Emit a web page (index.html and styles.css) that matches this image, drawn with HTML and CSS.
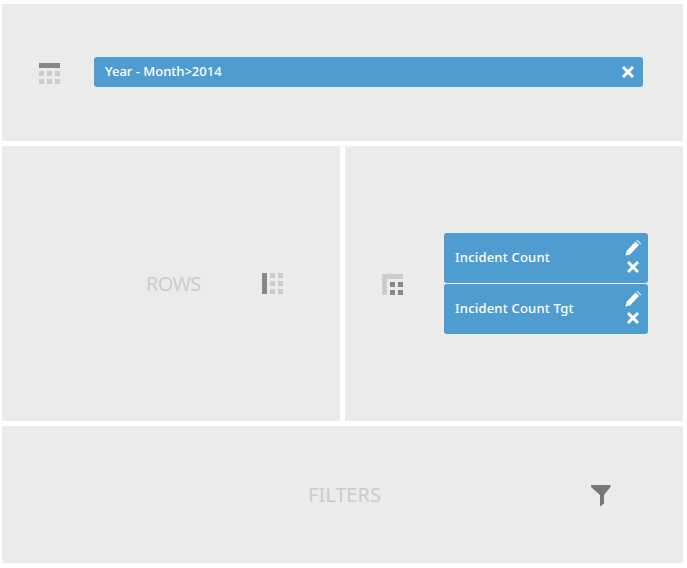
FILE: index.html
```html
<!DOCTYPE html>
<html>
<head>
    <meta charset="UTF-8">
    <title>Shelf</title>
    <link rel="stylesheet" href="styles.css">
</head>
<body>
    <div class="board">
        <div class="panel panel-columns">
            <svg class="icon icon-columns" width="21" height="21" viewBox="0 0 21 21">
                <rect x="0" y="0" width="21" height="5" fill="#888"/>
                <path d="M0 8h5v5h-5zM8 8h5v5h-5zM16 8h5v5h-5zM0 16h5v5h-5zM8 16h5v5h-5zM16 16h5v5h-5z" fill="#ccc"/>
            </svg>
            <div class="chip chip-wide">
                <span class="chip-label">Year - Month&gt;2014</span>
                <svg class="chip-close" width="14" height="14" viewBox="0 0 14 14">
                    <path d="M2 2l10 10M12 2l-10 10" stroke="#fff" stroke-width="3" fill="none"/>
                </svg>
            </div>
        </div>
        <div class="panel panel-rows">
            <span class="drop-label label-rows">ROWS</span>
            <svg class="icon" width="21" height="21" viewBox="0 0 21 21">
                <rect x="0" y="0" width="5" height="21" fill="#888"/>
                <path d="M8 0h5v5h-5zM16 0h5v5h-5zM8 8h5v5h-5zM16 8h5v5h-5zM8 16h5v5h-5zM16 16h5v5h-5z" fill="#ccc"/>
            </svg>
        </div>
        <div class="panel panel-values">
            <svg class="icon" width="21" height="21" viewBox="0 0 21 21">
                <path d="M0 0h21v5h-16v16h-5z" fill="#ccc"/>
                <path d="M8 8h5v5h-5zM16 8h5v5h-5zM8 16h5v5h-5zM16 16h5v5h-5z" fill="#888"/>
            </svg>
            <div class="chip-list">
                <div class="chip chip-tall">
                    <span class="chip-label">Incident Count</span>
                    <div class="chip-tools">
                        <svg width="16" height="16" viewBox="0 0 16 16">
                            <path d="M0.500 15.500l1-4.500 9-9.500 3.500 3.500-9 9.500zM11.500 0.500l1-0.500 3.500 3.500-0.500 1z" fill="#fff"/>
                        </svg>
                        <svg width="14" height="14" viewBox="0 0 14 14">
                            <path d="M2 2l10 10M12 2l-10 10" stroke="#fff" stroke-width="3" fill="none"/>
                        </svg>
                    </div>
                </div>
                <div class="chip chip-tall">
                    <span class="chip-label">Incident Count Tgt</span>
                    <div class="chip-tools">
                        <svg width="16" height="16" viewBox="0 0 16 16">
                            <path d="M0.500 15.500l1-4.500 9-9.500 3.500 3.500-9 9.500zM11.500 0.500l1-0.500 3.500 3.500-0.500 1z" fill="#fff"/>
                        </svg>
                        <svg width="14" height="14" viewBox="0 0 14 14">
                            <path d="M2 2l10 10M12 2l-10 10" stroke="#fff" stroke-width="3" fill="none"/>
                        </svg>
                    </div>
                </div>
            </div>
        </div>
        <div class="panel panel-filters">
            <span class="drop-label">FILTERS</span>
            <svg class="icon" width="20" height="22" viewBox="0 0 20 22">
                <path d="M0 0h19.500v2l-6.500 8v8.500l-4 3v-11.500l-9-8z" fill="#777"/>
            </svg>
        </div>
    </div>
</body>
</html>
```

FILE: styles.css
```css
html, body {
    margin: 0;
    padding: 0;
    background-color: #fff;
}

body {
    font-family: "Noto Sans", Arial, sans-serif;
}

.board {
    display: grid;
    grid-template-columns: 338px 338px;
    grid-template-rows: 137px 275px 137px;
    gap: 5px;
    padding: 4px 4px 5px 2px;
}

.panel {
    background-color: #ebebeb;
    display: flex;
    align-items: center;
}

.icon {
    flex: none;
    display: block;
}

.panel-columns {
    grid-column: 1 / 3;
    padding-left: 37px;
    padding-bottom: 1px;
    box-sizing: border-box;
}

.panel-columns .icon {
    margin: 2px 34px 0 0;
}

.chip {
    background-color: #4f9dd0;
    color: #fff;
    border-radius: 3px;
    display: flex;
    align-items: center;
    justify-content: space-between;
    box-sizing: border-box;
    padding-left: 11px;
    font-size: 13px;
    font-weight: 500;
}

.chip-wide {
    width: 549px;
    height: 30px;
    padding-right: 8px;
}

.chip-tall {
    width: 204px;
    height: 50px;
    padding-right: 7px;
    letter-spacing: 0.2px;
}

.chip-label {
    white-space: nowrap;
    padding-bottom: 2px;
}

.chip-list {
    display: flex;
    flex-direction: column;
    gap: 1px;
}

.chip-tools {
    display: flex;
    flex-direction: column;
    align-items: center;
    gap: 4px;
    padding-bottom: 3px;
}

.chip-tools svg {
    display: block;
}

.panel-rows {
    padding-left: 144px;
}

.panel-rows .icon {
    margin-left: 61px;
}

.label-rows {
    letter-spacing: -0.7px;
}

.panel-values {
    padding-left: 37px;
}

.panel-values .icon {
    margin: 1px 41px 0 0;
}

.panel-filters {
    grid-column: 1 / 3;
    padding-left: 306px;
}

.panel-filters .icon {
    margin-left: 210px;
    margin-top: 2px;
}

.drop-label {
    color: #ccc;
    font-size: 20px;
}
```
